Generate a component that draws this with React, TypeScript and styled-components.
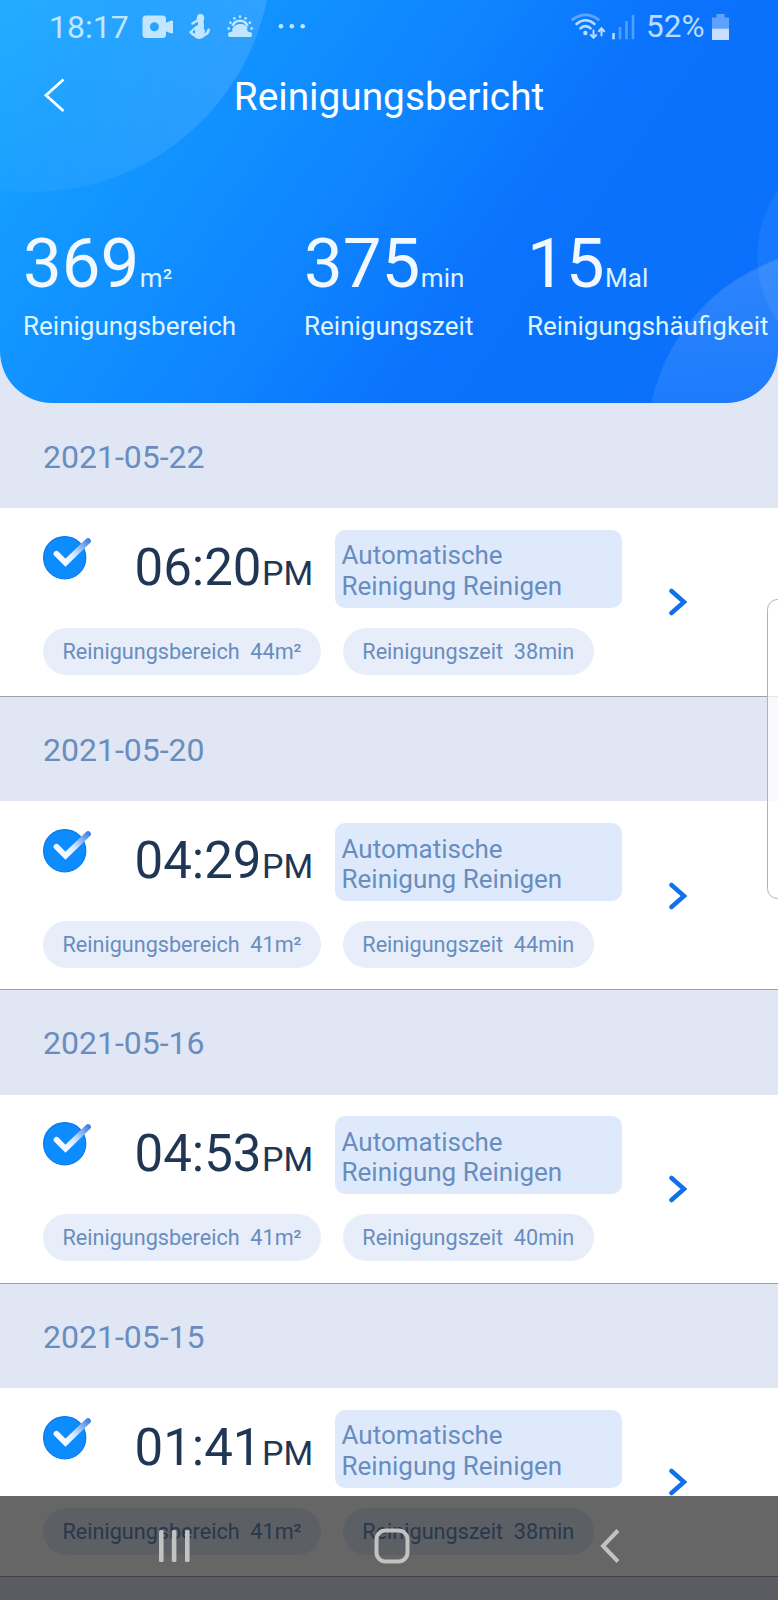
import React from 'react';
import styled, { createGlobalStyle } from 'styled-components';

const GlobalStyle = createGlobalStyle`
  * { box-sizing: border-box; }
  html, body { margin: 0; height: 100%; overflow: hidden; }
  body { font-family: Roboto, "Liberation Sans", sans-serif; background: #e1e6f4; }
  svg { display: block; flex: none; }
`;

const Screen = styled.div`
  position: relative;
  width: 778px;
  height: 1600px;
  overflow: hidden;
  background: #e1e6f4;
`;

const Header = styled.header`
  position: relative;
  height: 402.67px;
  overflow: hidden;
  border-radius: 0 0 52px 52px;
  color: #fff;
  background: linear-gradient(125deg, #1daaff 0%, #159dff 13%, #1192ff 27%, #0f86ff 44%, #0a72fc 65%, #0a70fb 100%);
`;

const HeaderArt = styled.svg`
  position: absolute;
  inset: 0;
`;

const StatusBar = styled.div`
  position: relative;
  display: flex;
  align-items: center;
  justify-content: space-between;
  height: 54px;
  padding: 0 49px 0 49px;
  font-size: 32px;
  line-height: 54px;
  color: #c3e6ff;
`;

const StatusGroup = styled.div`
  display: flex;
  align-items: center;
`;

const Clock = styled.span`
  width: 93px;
`;

const Percent = styled.span`
  margin: 0 7.5px 0 10.5px;
  font-size: 31.5px;
  color: #bcdcff;
`;

const TitleBar = styled.div`
  position: relative;
  display: grid;
  grid-template-columns: 80px 1fr 80px;
  align-items: center;
  height: 85px;
`;

const BackButton = styled.button`
  padding: 0 0 2px 43px;
  border: 0;
  background: none;
`;

const Title = styled.h1`
  margin: 0;
  text-align: center;
  font-size: 38.8px;
  line-height: 85px;
  font-weight: 400;
`;

const Stats = styled.div`
  position: relative;
  display: grid;
  grid-template-columns: 281px 223px auto;
  margin-top: 90px;
  padding-left: 23px;
  white-space: nowrap;
`;

const StatValue = styled.div`
  height: 70px;
  margin-bottom: 10px;
  font-size: 69px;
  line-height: 70px;
  color: #f1f8ff;
`;

const StatUnit = styled.span`
  margin-left: 0.5px;
  font-size: 26px;
  line-height: 1;
  color: #dff3ff;
`;

const StatLabel = styled.div`
  font-size: 26px;
  line-height: 34px;
  color: #dff5ff;
`;

const Reports = styled.main`
  padding-top: 1px;
`;

const DateBand = styled.div`
  height: 104.33px;
  padding: 3px 0 0 43px;
  font-size: 32px;
  line-height: 101px;
  color: #688dbe;
`;

const Card = styled.article`
  display: flex;
  align-items: center;
  height: 189px;
  padding: 0.6px 0 0 43px;
  border-bottom: 1px solid #9c9fae;
  background: #fff;
`;

const CardBody = styled.div`
  width: 626px;
`;

const CardTop = styled.div`
  display: flex;
  height: 78px;
`;

const CheckSlot = styled.div`
  width: 91.5px;
  padding-top: 6px;
`;

const Time = styled.div`
  width: 200.5px;
  font-size: 51px;
  line-height: 76px;
  color: #1f3655;
`;

const Meridiem = styled.span`
  margin-left: 0.5px;
  font-size: 34px;
  line-height: 1;
`;

const ModeTag = styled.div`
  width: 287px;
  padding: 10.5px 30px 0 6.5px;
  border-radius: 10px;
  font-size: 26px;
  line-height: 30.5px;
  color: #688dbe;
  background: #deeafb;
`;

const Pills = styled.div`
  display: flex;
  gap: 22px;
  margin-top: 20px;
`;

const Pill = styled.span`
  height: 47px;
  padding: 1px 19.3px 0 19.5px;
  border-radius: 24px;
  font-size: 21.62px;
  line-height: 46px;
  white-space: pre;
  color: #688dbe;
  background: #e7eefa;
`;

const EdgeHandle = styled.div`
  position: absolute;
  top: 599px;
  right: -10px;
  width: 21px;
  height: 300px;
  border: 1.5px solid #b2b2b2;
  border-radius: 14px;
  background: rgba(255, 255, 255, 0.75);
`;

const NavBar = styled.nav`
  position: absolute;
  left: 0;
  right: 0;
  bottom: 0;
  display: grid;
  grid-template-columns: 216.5px 225px auto;
  align-items: center;
  height: 104px;
  padding: 0 0 4px 157px;
  background: rgba(0, 0, 0, 0.6);
`;

const stats = [
  { value: '369', unit: 'm²', label: 'Reinigungsbereich' },
  { value: '375', unit: 'min', label: 'Reinigungszeit' },
  { value: '15', unit: 'Mal', label: 'Reinigungshäufigkeit' },
];

const reports = [
  { date: '2021-05-22', time: '06:20', area: 44, minutes: 38 },
  { date: '2021-05-20', time: '04:29', area: 41, minutes: 44 },
  { date: '2021-05-16', time: '04:53', area: 41, minutes: 40 },
  { date: '2021-05-15', time: '01:41', area: 41, minutes: 38 },
];

const HeaderCircles = () => (
  <HeaderArt width="778" height="403" viewBox="0 0 778 403">
    <defs>
      <linearGradient id="glowLeft" x1="0" y1="0" x2="1" y2="0">
        <stop offset="0.4" stopColor="#fff" stopOpacity="0.02" />
        <stop offset="1" stopColor="#fff" stopOpacity="0.13" />
      </linearGradient>
      <linearGradient id="glowRight" x1="0" y1="0" x2="0" y2="1">
        <stop offset="0" stopColor="#fff" stopOpacity="0.15" />
        <stop offset="0.45" stopColor="#fff" stopOpacity="0.07" />
      </linearGradient>
    </defs>
    <circle cx="31" cy="-49" r="241" fill="url(#glowLeft)" />
    <circle cx="871" cy="256" r="114" fill="#fff" fillOpacity="0.06" />
    <circle cx="843" cy="444" r="196" fill="url(#glowRight)" />
  </HeaderArt>
);

const NotificationIcons = () => (
  <svg width="164" height="30" viewBox="142 11 164 30" fill="#c3e6ff">
    <path
      fillRule="evenodd"
      d="M146 14.5h16.500q3.500 0 3.500 3.500v3.800l4.500-2h2.500v12.400h-2.500l-4.500-2v3.300q0 3.500-3.500 3.500H146q-3.500 0-3.500-3.500V18q0-3.500 3.500-3.500zM154.400 21.200a4.500 4.500 0 1 0 0 9a4.500 4.500 0 1 0 0-9z"
    />
    <ellipse cx="200.500" cy="17.300" rx="3.700" ry="4.300" />
    <path d="M197.500 19.500l-5 3" stroke="#c3e6ff" strokeWidth="2.600" strokeLinecap="round" />
    <path
      fillRule="evenodd"
      d="M197.500 20.500h6q1 3.500.2 6.500q1.800 2.500 1 5.800q2-1.300 2.800-4.800q1.500-1 2.500.3q0 5-5 6.700q-2.500 3.200-6 3t-5-2.500q-3-1.500-5-4.500l6.500-5.800q2-.7 2.800-2zM194.800 28.500l-2.500 2.400l2.800 2z"
    />
    <path d="M233 29.500a8 8 0 0 1 14-2" fill="none" stroke="#c3e6ff" strokeWidth="2.600" />
    <path d="M230.500 36q-2.500 0-2.500-2.600q0-2.500 4-2.700q1.500-6 8-6t8 6q4 .2 4 2.700q0 2.600-2.500 2.600z" />
    <path d="M232.500 25a8 8 0 0 1 15 0" fill="none" stroke="#c3e6ff" strokeWidth="2.600" />
    <path
      d="M228.500 27.500h.4M230.300 21.500l.3.200M234.300 17.200l.2.300M240 15.400v.4M245.700 17.200l-.2.300M250 21.500l-.3.200M251.800 27.500h-.4"
      stroke="#c3e6ff"
      strokeWidth="2.500"
      strokeLinecap="round"
    />
    <circle cx="281" cy="25.200" r="2.300" />
    <circle cx="291.800" cy="25.200" r="2.300" />
    <circle cx="302.700" cy="25.200" r="2.300" />
  </svg>
);

const SignalIcons = () => (
  <svg width="66" height="30" viewBox="570 11 66 30" fill="none" stroke="#bcdcff" strokeLinecap="round">
    <g strokeWidth="2.600">
      <path d="M572.500 18.600q13-9.600 26 0" strokeOpacity="0.45" />
      <path d="M576.500 23q9-7.500 18 0" />
      <path d="M580.500 27.300q5-4.200 10 0" />
    </g>
    <circle cx="585.400" cy="32" r="2.200" fill="#bcdcff" stroke="none" />
    <path d="M593.500 29.500v7M590.800 34l2.700 2.900l2.700-2.900M601.500 34.500v-7M598.800 30.200l2.700-2.900l2.700 2.900" strokeWidth="2" />
    <g strokeWidth="2.600" strokeLinecap="butt">
      <path d="M613.500 32v6.300" />
      <path d="M620 26v12.300M626.500 20v18.300M633 13.800v24.500" strokeOpacity="0.4" />
    </g>
  </svg>
);

const BatteryIcon = () => (
  <svg width="17" height="26" viewBox="0 0 17 26" fill="#c8ddff">
    <path d="M4.500 0h8v3.500H17v11H0v-11h4.500z" fillOpacity="0.45" />
    <path d="M0 14.500h17V26H0z" />
  </svg>
);

const CheckIcon = () => (
  <svg width="50" height="46" viewBox="0 0 50 46">
    <defs>
      <linearGradient id="tick" gradientUnits="userSpaceOnUse" x1="24" y1="24" x2="46" y2="5">
        <stop offset="0" stopColor="#f2f9ff" />
        <stop offset="0.35" stopColor="#cfe4ff" />
        <stop offset="1" stopColor="#4583e2" />
      </linearGradient>
    </defs>
    <circle cx="21.700" cy="21.700" r="21.100" fill="#0c8cff" stroke="#0b79ee" strokeWidth="1.200" />
    <path d="M13.500 17.800L22.500 26.700L45 5" fill="none" stroke="url(#tick)" strokeWidth="5.800" strokeLinecap="round" strokeLinejoin="miter" />
  </svg>
);

const App = () => (
  <>
    <GlobalStyle />
    <Screen>
      <Header>
        <HeaderCircles />
        <StatusBar>
          <StatusGroup>
            <Clock>18:17</Clock>
            <NotificationIcons />
          </StatusGroup>
          <StatusGroup>
            <SignalIcons />
            <Percent>52%</Percent>
            <BatteryIcon />
          </StatusGroup>
        </StatusBar>
        <TitleBar>
          <BackButton aria-label="Zurück">
            <svg width="23" height="36" viewBox="0 0 23 36" fill="none" stroke="#fff" strokeWidth="2.800">
              <path d="M20.500 1.500L3 17.200L20.500 33" />
            </svg>
          </BackButton>
          <Title>Reinigungsbericht</Title>
        </TitleBar>
        <Stats>
          {stats.map((s) => (
            <div key={s.label}>
              <StatValue>
                {s.value}
                <StatUnit>{s.unit}</StatUnit>
              </StatValue>
              <StatLabel>{s.label}</StatLabel>
            </div>
          ))}
        </Stats>
      </Header>
      <Reports>
        {reports.map((r) => (
          <section key={r.date}>
            <DateBand>{r.date}</DateBand>
            <Card>
              <CardBody>
                <CardTop>
                  <CheckSlot>
                    <CheckIcon />
                  </CheckSlot>
                  <Time>
                    {r.time}
                    <Meridiem>PM</Meridiem>
                  </Time>
                  <ModeTag>Automatische Reinigung Reinigen</ModeTag>
                </CardTop>
                <Pills>
                  <Pill>{`Reinigungsbereich  ${r.area}m²`}</Pill>
                  <Pill>{`Reinigungszeit  ${r.minutes}min`}</Pill>
                </Pills>
              </CardBody>
              <svg width="20" height="30" viewBox="0 0 20 30" fill="none" stroke="#1271ea" strokeWidth="4.500" strokeLinecap="round">
                <path d="M2.500 4L15 15L2.500 26" />
              </svg>
            </Card>
          </section>
        ))}
      </Reports>
      <EdgeHandle />
      <NavBar>
        <svg width="35" height="34" viewBox="0 0 35 34" fill="#c2c2c2">
          <rect x="2" y="1" width="4.600" height="32" rx="1.500" />
          <rect x="14.800" y="1" width="4.600" height="32" rx="1.500" />
          <rect x="28" y="1" width="4.600" height="32" rx="1.500" />
        </svg>
        <svg width="36" height="36" viewBox="0 0 36 36" fill="none" stroke="#c2c2c2" strokeWidth="4">
          <rect x="2.500" y="2.500" width="31" height="31" rx="9" />
        </svg>
        <svg width="21" height="36" viewBox="0 0 21 36" fill="none" stroke="#c2c2c2" strokeWidth="4">
          <path d="M19 2.500L4 18L19 33.500" />
        </svg>
      </NavBar>
    </Screen>
  </>
);

export default App;
